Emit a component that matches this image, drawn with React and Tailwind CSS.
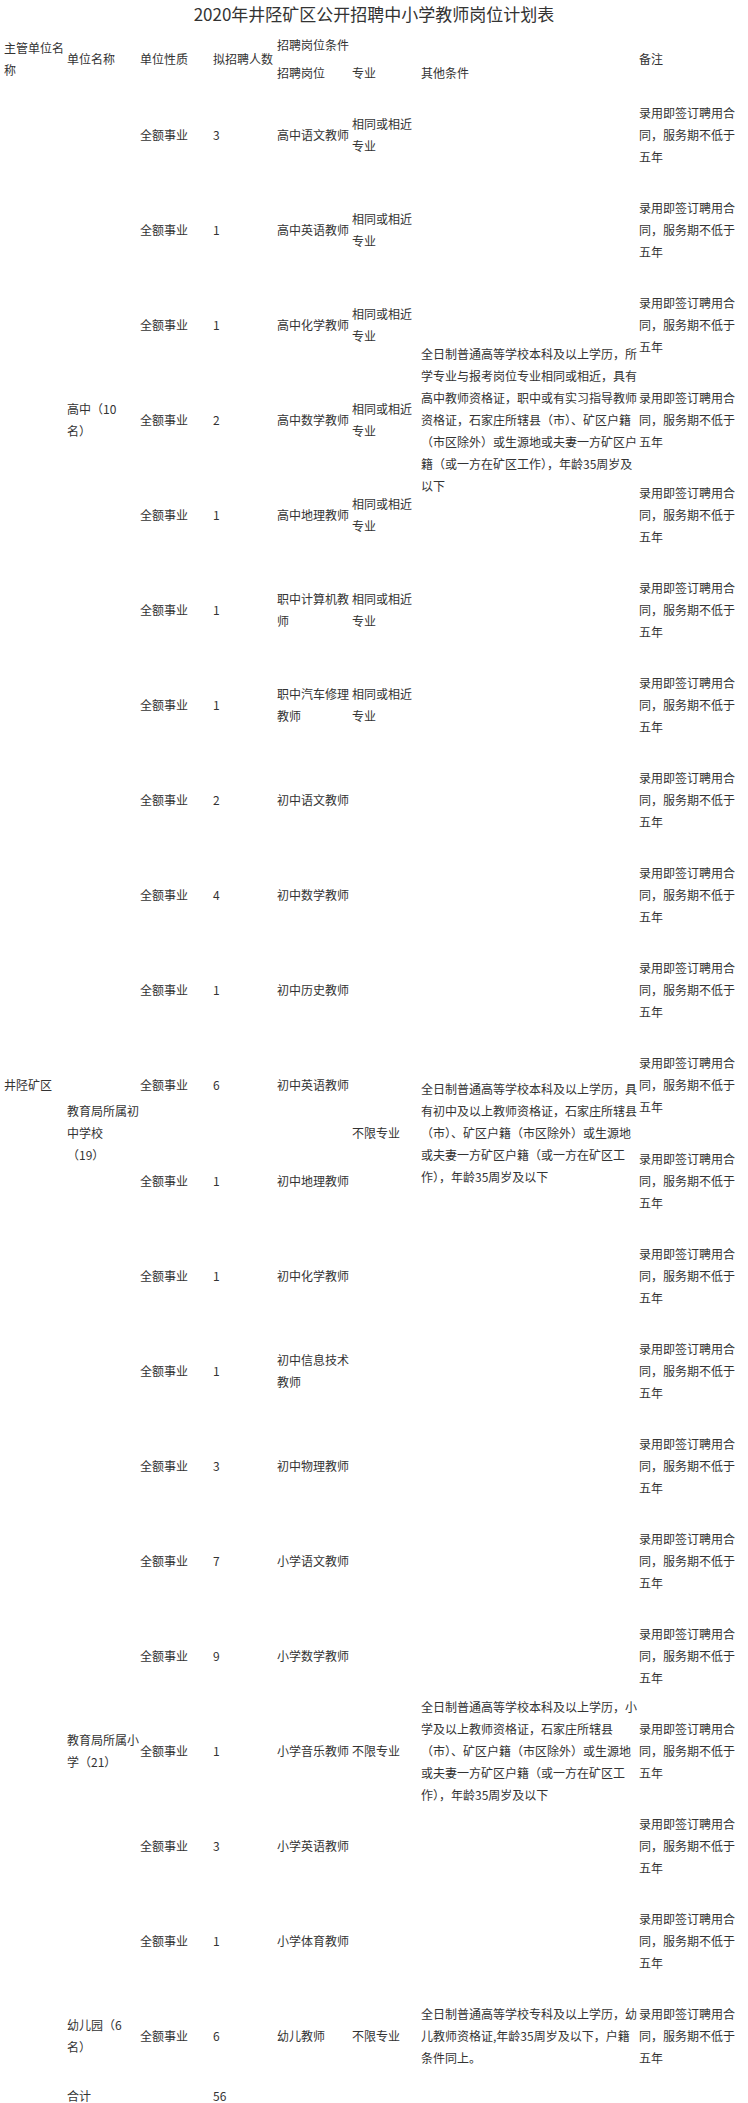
const REMARK = ['录用即签订聘用合', '同，服务期不低于', '五年'];

const rows = [
  { pos: ['高中语文教师'], n: 3 },
  { pos: ['高中英语教师'], n: 1 },
  { pos: ['高中化学教师'], n: 1 },
  { pos: ['高中数学教师'], n: 2 },
  { pos: ['高中地理教师'], n: 1 },
  { pos: ['职中计算机教', '师'], n: 1 },
  { pos: ['职中汽车修理', '教师'], n: 1 },
  { pos: ['初中语文教师'], n: 2 },
  { pos: ['初中数学教师'], n: 4 },
  { pos: ['初中历史教师'], n: 1 },
  { pos: ['初中英语教师'], n: 6 },
  { pos: ['初中地理教师'], n: 1 },
  { pos: ['初中化学教师'], n: 1 },
  { pos: ['初中信息技术', '教师'], n: 1 },
  { pos: ['初中物理教师'], n: 3 },
  { pos: ['小学语文教师'], n: 7 },
  { pos: ['小学数学教师'], n: 9 },
  { pos: ['小学音乐教师'], n: 1 },
  { pos: ['小学英语教师'], n: 3 },
  { pos: ['小学体育教师'], n: 1 },
  { pos: ['幼儿教师'], n: 6 },
];

// groups keyed by the first row index they cover
const groups = {
  0: {
    span: 7,
    unit: ['高中（10', '名）'],
    major: null,
    other: [
      '全日制普通高等学校本科及以上学历，所',
      '学专业与报考岗位专业相同或相近，具有',
      '高中教师资格证，职中或有实习指导教师',
      '资格证，石家庄所辖县（市）、矿区户籍',
      '（市区除外）或生源地或夫妻一方矿区户',
      '籍（或一方在矿区工作），年龄35周岁及',
      '以下',
    ],
  },
  7: {
    span: 8,
    unit: ['教育局所属初', '中学校', '（19）'],
    major: ['不限专业'],
    other: [
      '全日制普通高等学校本科及以上学历，具',
      '有初中及以上教师资格证，石家庄所辖县',
      '（市）、矿区户籍（市区除外）或生源地',
      '或夫妻一方矿区户籍（或一方在矿区工',
      '作），年龄35周岁及以下',
    ],
  },
  15: {
    span: 5,
    unit: ['教育局所属小', '学（21）'],
    major: ['不限专业'],
    other: [
      '全日制普通高等学校本科及以上学历，小',
      '学及以上教师资格证，石家庄所辖县',
      '（市）、矿区户籍（市区除外）或生源地',
      '或夫妻一方矿区户籍（或一方在矿区工',
      '作），年龄35周岁及以下',
    ],
  },
  20: {
    span: 1,
    unit: ['幼儿园（6', '名）'],
    major: ['不限专业'],
    other: [
      '全日制普通高等学校专科及以上学历，幼',
      '儿教师资格证,年龄35周岁及以下，户籍',
      '条件同上。',
    ],
  },
};

const Lines = ({ lines }) => (
  <>
    {lines.map((l, i) => (
      <div key={i} className="whitespace-nowrap">{l}</div>
    ))}
  </>
);

const cell = 'p-0 text-left align-middle font-normal';

export default function App() {
  let open = null;

  return (
    <div
      className="w-[748px] bg-white text-[#333333] text-[12px] leading-[22px]"
      style={{ fontFamily: '"Noto Sans CJK SC", "Noto Sans", sans-serif' }}
    >
      <div className="h-[31px] text-center text-[17px] leading-[28px]">
        2020年井陉矿区公开招聘中小学教师岗位计划表
      </div>

      <table className="ml-[4px] w-[740px] table-fixed border-collapse">
        <colgroup>
          <col className="w-[63px]" />
          <col className="w-[73px]" />
          <col className="w-[73px]" />
          <col className="w-[64px]" />
          <col className="w-[75px]" />
          <col className="w-[69px]" />
          <col className="w-[218px]" />
          <col className="w-[105px]" />
        </colgroup>
        <thead>
          <tr className="h-[28px]">
            <th rowSpan={2} className={cell}>
              <Lines lines={['主管单位名', '称']} />
            </th>
            <th rowSpan={2} className={cell}>单位名称</th>
            <th rowSpan={2} className={cell}>单位性质</th>
            <th rowSpan={2} className={cell}>拟招聘人数</th>
            <th colSpan={3} className={cell}>招聘岗位条件</th>
            <th rowSpan={2} className={cell}>备注</th>
          </tr>
          <tr className="h-[28px]">
            <th className={cell}>招聘岗位</th>
            <th className={cell}>专业</th>
            <th className={cell}>其他条件</th>
          </tr>
        </thead>
        <tbody>
          {rows.map((r, i) => {
            if (groups[i]) open = groups[i];
            const g = groups[i];
            return (
              <tr key={i} className="h-[95.1px]">
                {i === 0 && (
                  <td rowSpan={rows.length} className={cell}>井陉矿区</td>
                )}
                {g && (
                  <td rowSpan={g.span} className={cell}>
                    <Lines lines={g.unit} />
                  </td>
                )}
                <td className={cell}>全额事业</td>
                <td className={cell}>{r.n}</td>
                <td className={cell}>
                  <Lines lines={r.pos} />
                </td>
                {open.major === null ? (
                  <td className={cell}>
                    <Lines lines={['相同或相近', '专业']} />
                  </td>
                ) : (
                  g && (
                    <td rowSpan={g.span} className={cell}>
                      <Lines lines={g.major} />
                    </td>
                  )
                )}
                {g && (
                  <td rowSpan={g.span} className={cell}>
                    <Lines lines={g.other} />
                  </td>
                )}
                <td className={cell}>
                  <Lines lines={REMARK} />
                </td>
              </tr>
            );
          })}
          <tr className="h-[24px]">
            <td className={cell}></td>
            <td className={cell}>合计</td>
            <td className={cell}></td>
            <td className={cell}>56</td>
            <td className={cell}></td>
            <td className={cell}></td>
            <td className={cell}></td>
            <td className={cell}></td>
          </tr>
        </tbody>
      </table>
    </div>
  );
}
